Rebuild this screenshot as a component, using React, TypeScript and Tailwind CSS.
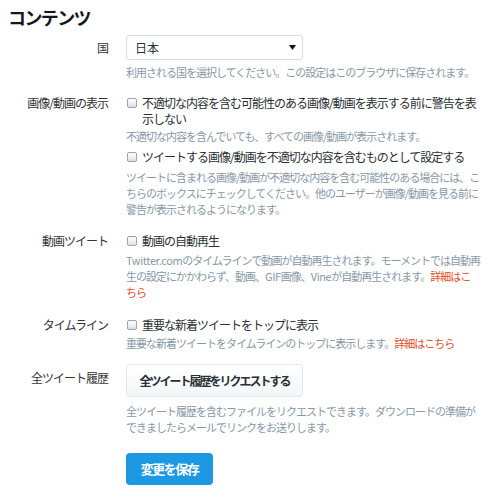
import type { ReactNode } from "react";

function Row({ label, children, labelClass = "" }: { label: string; children: ReactNode; labelClass?: string }) {
  return (
    <div className="flex items-start">
      <div className={`w-[100px] shrink-0 text-right text-[12px] tracking-[-1px] text-[#333] ${labelClass}`}>{label}</div>
      <div className="ml-[18px] w-[358px]">{children}</div>
    </div>
  );
}

function Check({ children }: { children: ReactNode }) {
  return (
    <label className="flex items-start text-[12px] leading-[16px] tracking-[-1px] text-[#292f33]">
      <span className="mt-[3px] ml-[1px] h-[10px] w-[10px] shrink-0 rounded-[2px] border border-[#9aa4ab] bg-gradient-to-b from-white to-[#dde2e6]" />
      <span className="ml-[5px]">{children}</span>
    </label>
  );
}

function Help({ children, className = "" }: { children: ReactNode; className?: string }) {
  return <p className={`text-[11px] leading-[16px] tracking-[-1px] text-[#8899a6] ${className}`}>{children}</p>;
}

function More() {
  return <span className="text-[#e4502a]">詳細はこちら</span>;
}

export default function App() {
  return (
    <div className="h-[498px] w-[490px] overflow-hidden bg-white px-[8px] pt-[6px] font-['Noto_Sans_CJK_JP','Noto_Sans',sans-serif]">
      <h2 className="text-[18px] leading-[22px] font-bold tracking-[-1.6px] text-[#14171a]">コンテンツ</h2>

      <div className="mt-[7px]">
        <Row label="国" labelClass="leading-[25px]">
          <div className="flex h-[25px] w-[177px] items-center justify-between rounded-[3px] border border-[#d6dce0] bg-white pr-[6px] pl-[8px] text-[12px] text-[#292f33]">
            <span>日本</span>
            <svg width="7" height="5" viewBox="0 0 7 5">
              <path d="M0 0h7L3.5 5z" fill="#111" />
            </svg>
          </div>
          <Help className="mt-[4px]">利用される国を選択してください。この設定はこのブラウザに保存されます。</Help>
        </Row>
      </div>

      <div className="mt-[15px]">
        <Row label="画像/動画の表示" labelClass="leading-[16px]">
          <Check>
            不適切な内容を含む可能性のある画像/動画を表示する前に警告を表
            <br />
            示しない
          </Check>
          <Help className="mt-[1px]">不適切な内容を含んでいても、すべての画像/動画が表示されます。</Help>
          <div className="mt-[5px]">
            <Check>ツイートする画像/動画を不適切な内容を含むものとして設定する</Check>
          </div>
          <Help className="mt-[4px]">
            ツイートに含まれる画像/動画が不適切な内容を含む可能性のある場合には、こ
            <br />
            ちらのボックスにチェックしてください。他のユーザーが画像/動画を見る前に
            <br />
            警告が表示されるようになります。
          </Help>
        </Row>
      </div>

      <div className="mt-[16px]">
        <Row label="動画ツイート" labelClass="leading-[16px]">
          <Check>動画の自動再生</Check>
          <Help className="mt-[3px]">
            <span className="tracking-[-0.4px]">Twitter.com</span>のタイムラインで動画が自動再生されます。モーメントでは自動再
            <br />
            生の設定にかかわらず、動画、<span className="tracking-[-0.4px]">GIF</span>画像、
            <span className="tracking-[-0.4px]">Vine</span>が自動再生されます。<span className="text-[#e4502a]">詳細はこ</span>
            <br />
            <span className="text-[#e4502a]">ちら</span>
          </Help>
        </Row>
      </div>

      <div className="mt-[17px]">
        <Row label="タイムライン" labelClass="leading-[16px]">
          <Check>重要な新着ツイートをトップに表示</Check>
          <Help className="mt-[2px]">
            重要な新着ツイートをタイムラインのトップに表示します。<More />
          </Help>
        </Row>
      </div>

      <div className="mt-[13px]">
        <Row label="全ツイート履歴" labelClass="leading-[16px] mt-[6px]">
          <button className="h-[33px] w-[177px] rounded-[4px] border border-[#e1e8ed] bg-gradient-to-b from-white to-[#f3f6f8] text-[12px] font-bold tracking-[-2px] text-[#292f33]">
            全ツイート履歴をリクエストする
          </button>
          <Help className="mt-[6px]">
            全ツイート履歴を含むファイルをリクエストできます。ダウンロードの準備が
            <br />
            できましたらメールでリンクをお送りします。
          </Help>
          <button className="mt-[18px] h-[32px] w-[87px] rounded-[4px] bg-[#1d98e3] text-[13px] font-bold tracking-[-1.5px] text-white">
            変更を保存
          </button>
        </Row>
      </div>
    </div>
  );
}
